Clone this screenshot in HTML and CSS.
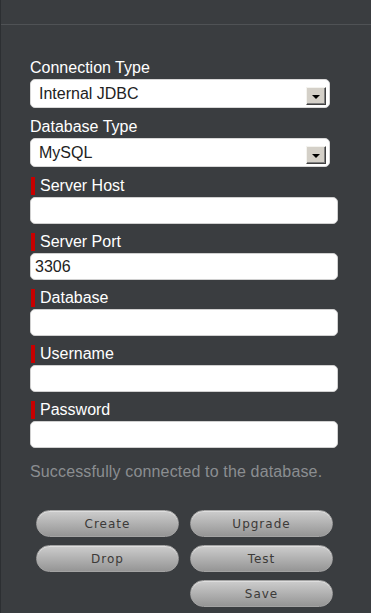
FILE: index.html
```html
<!DOCTYPE html>
<html lang="en">
<head>
    <meta charset="UTF-8">
    <meta name="viewport" content="width=device-width, initial-scale=1.0">
    <title>Database Settings</title>
    <link rel="stylesheet" href="styles.css">
</head>
<body>
    <div class="panel">
        <div class="panel-title"><span>Version 4.2.1</span></div>

        <form class="db-form">
            <div class="field select-field">
                <label class="field-label">Connection Type</label>
                <div class="select">
                    <span class="select-value">Internal JDBC</span>
                    <span class="select-arrow"></span>
                </div>
            </div>

            <div class="field select-field">
                <label class="field-label">Database Type</label>
                <div class="select">
                    <span class="select-value">MySQL</span>
                    <span class="select-arrow"></span>
                </div>
            </div>

            <div class="field">
                <label class="field-label required">Server Host</label>
                <input type="text" class="text-input" />
            </div>

            <div class="field">
                <label class="field-label required">Server Port</label>
                <input type="text" class="text-input" value="3306" />
            </div>

            <div class="field">
                <label class="field-label required">Database</label>
                <input type="text" class="text-input" />
            </div>

            <div class="field">
                <label class="field-label required">Username</label>
                <input type="text" class="text-input" />
            </div>

            <div class="field">
                <label class="field-label required">Password</label>
                <input type="password" class="text-input" />
            </div>

            <p class="status-message">Successfully connected to the database.</p>

            <div class="form-actions">
                <button type="button" class="pill-button">Create</button>
                <button type="button" class="pill-button">Upgrade</button>
                <button type="button" class="pill-button">Drop</button>
                <button type="button" class="pill-button">Test</button>
                <button type="button" class="pill-button save">Save</button>
            </div>
        </form>
    </div>
</body>
</html>
```

FILE: styles.css
```css
body {
    margin: 0;
    background-color: #3a3d40;
    font-family: 'Liberation Sans', Arial, sans-serif;
    color: #fff;
}

.panel {
    min-height: 100vh;
    border-left: 1px solid #2c2f32;
    box-sizing: border-box;
}

.panel-title {
    height: 24px;
    overflow: hidden;
    border-bottom: 1px solid #4f5255;
    padding-left: 32px;
    color: #c4c6c8;
    font-size: 16px;
}

.panel-title span {
    display: block;
    line-height: 17px;
    margin-top: -14px;
}

.db-form {
    padding: 34px 0 0 29px;
}

.field {
    display: flex;
    flex-direction: column;
    gap: 2px;
    margin-bottom: 9px;
    width: 308px;
}

.select-field {
    width: 300px;
    margin-bottom: 10px;
}

.field-label {
    font-size: 16px;
    line-height: 18px;
    color: #fff;
}

.field-label.required {
    border-left: 4px solid #c80000;
    padding-left: 5px;
    margin-left: 1px;
}

.select {
    display: flex;
    justify-content: space-between;
    height: 29px;
    box-sizing: border-box;
    background-color: #fff;
    border: 1px solid #d8d8d8;
    border-radius: 5px;
    padding: 0 3px 0 8px;
    color: #222;
    font-size: 16px;
}

.select-value {
    align-self: center;
    line-height: 18px;
}

.select-arrow {
    align-self: flex-end;
    margin-bottom: 2px;
    width: 20px;
    height: 18px;
    box-sizing: border-box;
    background-color: #d4d0c8;
    border: 1px solid;
    border-color: #f4f3ef #404040 #404040 #f4f3ef;
    box-shadow: inset -1px -1px 0 #808080;
    display: flex;
    justify-content: center;
    align-items: center;
}

.select-arrow::after {
    content: '';
    border-left: 4px solid transparent;
    border-right: 4px solid transparent;
    border-top: 4px solid #000;
    margin: 1px 1px 0 0;
}

.text-input {
    height: 27px;
    box-sizing: border-box;
    border: 1px solid #d0d0d0;
    border-radius: 5px;
    padding: 0 4px;
    font-family: 'Liberation Sans', Arial, sans-serif;
    font-size: 16px;
    color: #222;
    background-color: #fff;
    outline: none;
}

.status-message {
    margin: 15px 0 0 0;
    font-size: 16px;
    line-height: 18px;
    letter-spacing: 0.15px;
    color: #8b8e91;
}

.form-actions {
    display: grid;
    grid-template-columns: 143px 143px;
    column-gap: 11px;
    row-gap: 8px;
    margin: 29px 0 0 6px;
}

.pill-button {
    height: 27px;
    border: 1px solid #a3a3a3;
    border-radius: 14px;
    background: linear-gradient(#cdcdcd, #959595);
    box-shadow: inset 0 1px 0 #dedede;
    font-family: 'DejaVu Sans', Verdana, sans-serif;
    font-size: 12px;
    letter-spacing: 1px;
    color: #3c3a38;
    padding: 0;
}

.pill-button.save {
    grid-column: 2;
}
```
